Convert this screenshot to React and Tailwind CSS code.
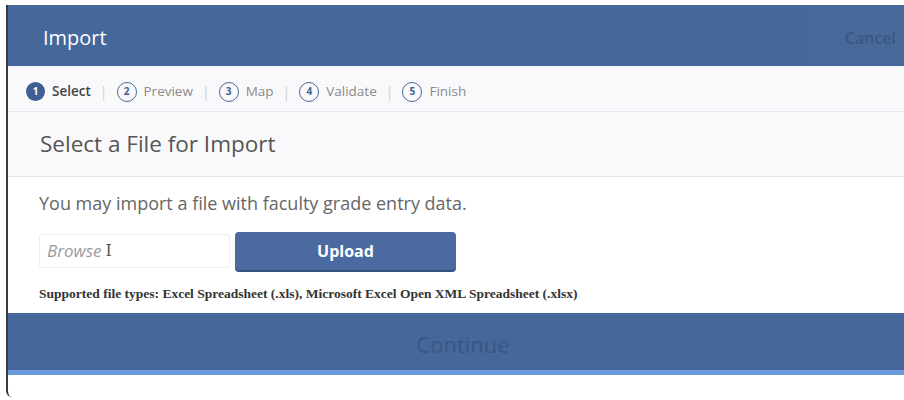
import React from "react";

const steps = [
  { n: 1, label: "Select", active: true },
  { n: 2, label: "Preview" },
  { n: 3, label: "Map" },
  { n: 4, label: "Validate" },
  { n: 5, label: "Finish" },
];

function Step({ n, label, active, last }) {
  return (
    <div className="flex items-center">
      <span
        className={
          active
            ? "flex h-[19px] w-[19px] items-center justify-center rounded-full bg-[#3f5f92] text-[10px] font-bold text-white"
            : "flex h-[20px] w-[20px] items-center justify-center rounded-full border-[1.5px] border-[#4a6796] text-[10px] font-bold text-[#3f5f92]"
        }
      >
        {n}
      </span>
      <span
        className={
          active
            ? "ml-[7px] text-[13.5px] font-semibold text-[#444]"
            : "ml-[7px] text-[13.5px] text-[#8a8a8a]"
        }
      >
        {label}
      </span>
      {!last && <span className="mx-[9px] text-[14px] text-[#d0d0d0]">|</span>}
    </div>
  );
}

export default function App() {
  return (
    <div
      className="h-[400px] w-[904px] overflow-hidden bg-white pl-[6px] pt-[5px]"
      style={{ fontFamily: '"Open Sans", sans-serif' }}
    >
      <div className="flex h-[392px] flex-col rounded-bl-[6px] border-l-2 border-[#3a3a3a] bg-white">
        {/* header */}
        <div className="flex h-[61px] items-center justify-between bg-[#456799] pl-[35px]">
          <span className="pt-[5px] text-[20px] text-white">Import</span>
          <div className="flex h-[52px] w-[96px] items-center justify-end bg-[#486a9b] pr-[8px] pt-[4px]">
            <span className="text-[16px] font-semibold text-[#3c5683]">Cancel</span>
          </div>
        </div>

        {/* wizard steps */}
        <div className="flex h-[46px] items-center border-b border-[#e6e6ec] bg-[#f9f9fb] pl-[18px] pt-[6px]">
          {steps.map((s, i) => (
            <Step key={s.n} {...s} last={i === steps.length - 1} />
          ))}
        </div>

        {/* section title */}
        <div className="flex h-[65px] items-center border-b border-[#e2e2ea] bg-[#f9f9fb] pl-[32px]">
          <span className="text-[22.5px] leading-[30px] text-[#555]">Select a File for Import</span>
        </div>

        {/* body */}
        <div className="flex flex-col pl-[31px] pt-[13px]">
          <p className="text-[18px] leading-[26px] text-[#666]">You may import a file with faculty grade entry data.</p>
          <div className="mt-[16px] flex items-center">
            <div className="flex h-[34px] w-[191px] items-center rounded-[3px] border border-[#efeff2] pl-[7px]">
              <span className="text-[17px] italic text-[#9a9a9a]">Browse</span>
              <span className="ml-[4px] text-[16px] text-[#555]" style={{ fontFamily: '"DejaVu Serif", serif' }}>I</span>
            </div>
            <button className="ml-[5px] flex h-[38px] w-[221px] items-center justify-center rounded-[4px] bg-[#4a6aa0] text-[16px] font-bold text-white shadow-[0_2px_0_#34507e]">
              Upload
            </button>
          </div>
          <p
            className="mt-[15px] text-[13.5px] font-bold leading-[18px] text-[#333]"
            style={{ fontFamily: '"Liberation Serif", serif' }}
          >
            Supported file types: Excel Spreadsheet (.xls), Microsoft Excel Open XML Spreadsheet (.xlsx)
          </p>
        </div>

        {/* footer */}
        <div className="mt-auto flex h-[57px] items-center justify-center bg-[#456799] pl-[14px] pt-[6px]">
          <span className="text-[22px] text-[#3a5682]">Continue</span>
        </div>
        <div className="h-[5px] bg-[#6a98dc]" />
        <div className="h-[22px]" />
      </div>
    </div>
  );
}
